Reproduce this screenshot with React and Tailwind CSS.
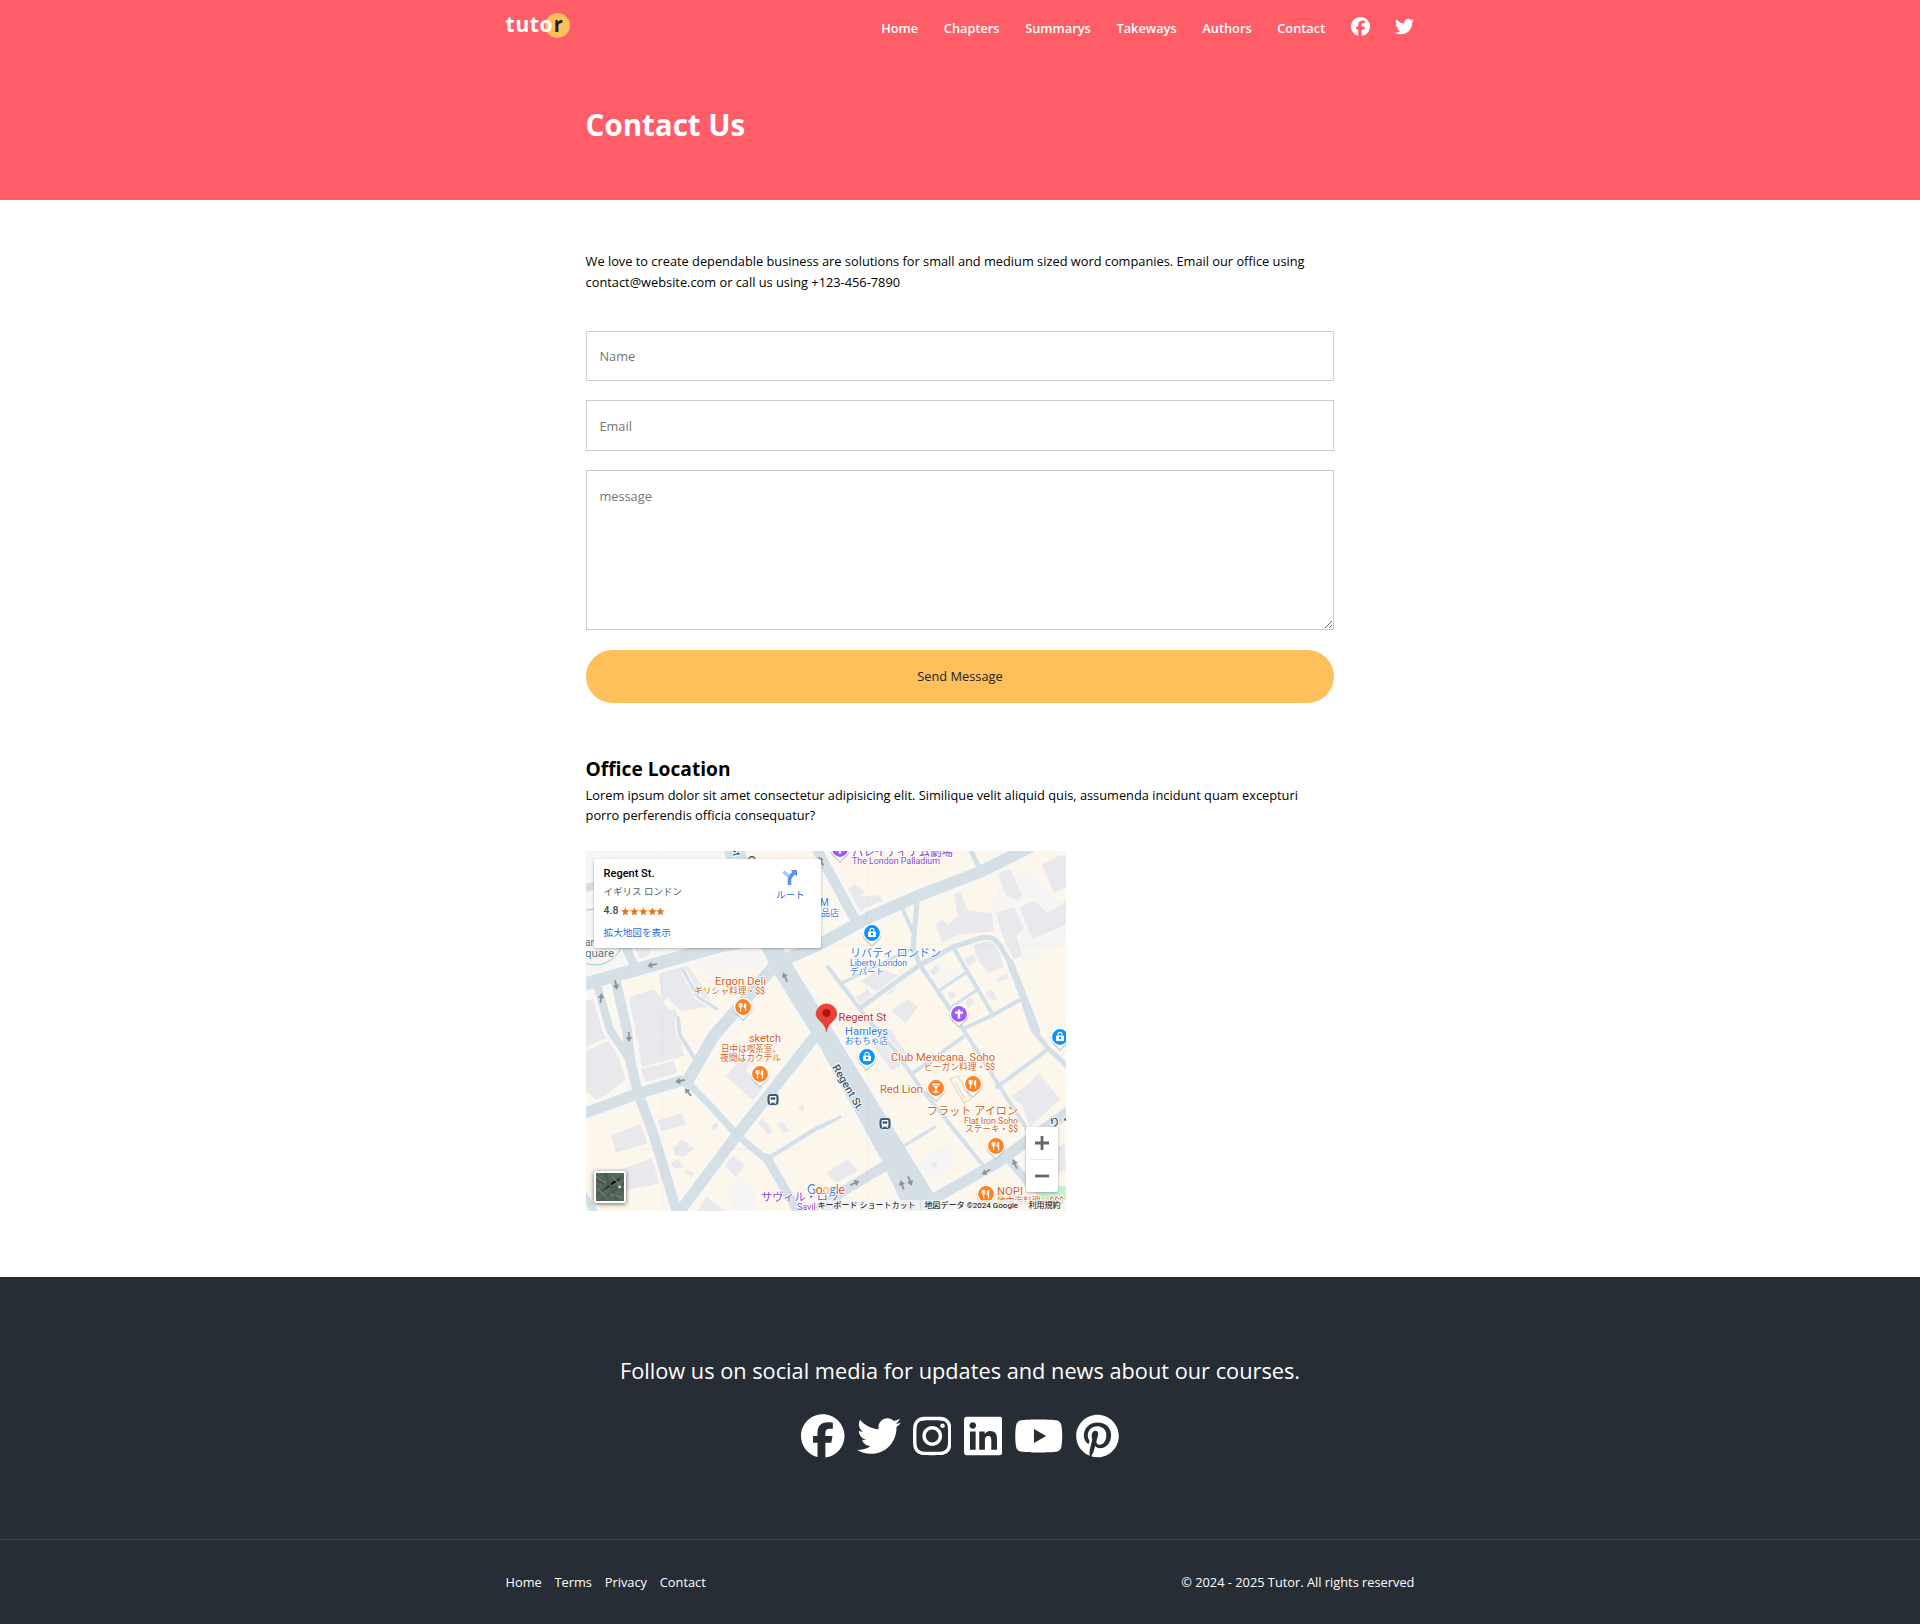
import { FaFacebook, FaTwitter, FaInstagram, FaLinkedin, FaYoutube, FaPinterest } from "react-icons/fa6";

const NAV = ["Home", "Chapters", "Summarys", "Takeways", "Authors", "Contact"];
const LINKS = ["Home", "Terms", "Privacy", "Contact"];

const BUILDINGS = [
  "18,50 45,30 80,60 60,110 35,100",
  "82,120 100,112 116,135 128,155 96,160 84,150",
  "44,146 68,138 88,165 60,180 42,170",
  "72,114 92,106 104,140 76,150",
  "0,200 26,188 40,228 12,250 0,240",
  "52,190 92,182 98,205 56,216",
  "55,218 88,210 92,226 60,232",
  "0,150 12,146 24,186 0,196",
  "48,160 90,158 94,182 50,190",
  "70,270 96,262 100,274 74,280",
  "25,284 55,273 62,292 30,302",
  "32,320 66,307 74,332 36,340",
  "88,296 96,288 108,298 98,306 88,304",
  "84,312 92,308 98,316 88,318",
  "100,318 108,322 106,326 98,322",
  "140,225 158,205 164,210 160,220 178,238 168,250",
  "125,276 131,268 134,272 128,280",
  "136,312 146,303 158,314 150,326",
  "171,270 176,267 187,280 182,284",
  "191,274 196,270 204,280 198,282",
  "212,256 216,253 219,259 215,261",
  "112,360 120,346 140,360",
  "256,44 268,33 278,40 276,46 292,44 301,54 288,62 280,54 276,62 270,61",
  "368,44 374,40 382,60 406,62 408,80 372,84 356,92 350,74 356,68 362,74 372,64",
  "412,22 424,18 436,44 432,50 420,44",
  "456,14 474,4 480,6 480,36 468,42",
  "410,62 428,56 438,78 430,84 436,104 428,108 416,84",
  "434,56 448,50 462,62 480,50 480,74 446,88",
  "388,94 408,88 418,116 402,122 390,106",
  "378,108 386,104 391,110 382,116",
  "344,120 350,114 354,118 348,124",
  "361,142 367,140 370,146 364,148",
  "378,148 384,143 388,152 382,157",
  "399,142 406,138 411,148 406,150",
  "410,128 420,123 425,126 412,132",
  "305,159 322,148 332,156 320,172 312,166",
  "275,130 294,118 318,126 304,144 292,142",
  "268,148 282,138 286,144 274,156",
  "284,190 304,178 324,208 306,220",
  "424,246 444,232 452,222 474,248 444,276 436,254",
  "240,322 262,308 272,320 250,332",
  "345,313 350,311 352,315 347,317",
  "456,306 478,292 480,318 470,324",
  "310,346 326,338 336,352 320,360",
];

const PALE = [
  "100,70 172,82 186,112 130,124 92,112",
  "336,308 358,292 372,310 350,330 336,324",
  "416,28 446,20 480,60 480,90 440,112 424,90 402,66",
  "142,340 152,326 170,336 170,360 146,360",
  "126,232 130,230 136,236 132,238",
  "0,0 140,0 150,20 160,60 120,110 40,110 0,130",
  "336,126 352,110 372,120 358,140",
];

const REGENT = "137,-2 158,-2 195,94 211,121 247,179 349,345 356,362 320,362 297,312 234,196 187,121 172,90";

const ROADS = [
  ["M-4,134 L77,111 L130,96 L190,84", 13],
  ["M200,108 L234,93 L284,66 L334,44 L394,21 L444,-4", 12],
  ["M222,-18 L271,72", 10],
  ["M384,-2 L394,18", 5],
  ["M316,57 L327,81", 4],
  ["M331,50 L327,97 L334,114", 5],
  ["M274,157 L334,114 L367,96 L395,87 Q407,84 413,93 L424,111 L447,179 L461,196 L484,218", 5],
  ["M424,111 L451,180", 7],
  ["M334,114 L364,158 L377,178 L414,236 L446,286", 4],
  ["M367,96 L407,164", 4],
  ["M354,139 L381,121", 3],
  ["M364,157 L391,139", 3],
  ["M377,178 L407,164 L437,147", 4],
  ["M242,116 L284,171 L311,202 L334,236 L399,317", 4],
  ["M256,132 L327,97", 3],
  ["M327,222 L377,186", 4],
  ["M411,236 L461,199", 4],
  ["M316,296 L349,276", 3],
  ["M347,348 L411,312 L441,290 L484,260", 11],
  ["M421,306 L444,334 L470,352", 8],
  ["M230,362 L254,342 L297,316", 10],
  ["M234,277 L254,266", 3],
  ["M91,364 L151,284 L181,246 L234,179", 11],
  ["M195,107 L127,186 L101,231", 12],
  ["M101,231 L122,252 L151,284 L181,309", 7],
  ["M181,307 L193,328 L214,364", 9],
  ["M-4,263 L51,243 L94,230", 11],
  ["M12,137 L24,179 L44,209", 8],
  ["M29,127 L41,179 L44,209 L52,242 L67,282 L92,364", 10],
  ["M97,119 L112,146 L131,158", 3],
  ["M92,167 L94,184 L109,208", 4],
  ["M181,308 L231,277 L246,270", 4],
  ["M-2,344 L10,364", 7],
  ["M38,92 L48,114", 9],
  ["M-2,38 L10,34", 8],
];

const ARROWS = [
  [66, 114, 168], [30, 134, 78], [15, 147, -82], [199, 126, -115], [43, 186, 88], [94, 230, 168],
  [102, 241, -130], [269, 332, -25], [316, 334, -112], [324, 330, 68], [400, 321, 150], [429, 313, -112], [235, 10, -118],
];

const PINS = [
  [157, 156, "food"], [174, 223, "food"], [387, 233, "food"], [410, 295, "food"], [400, 343, "food"],
  [350, 237, "drink"], [286, 82, "shop"], [281, 206, "shop"], [474, 186, "shop"], [373, 163, "church"], [254, -2, "church"],
];

const PIN_COLOR = { food: "#ff8126", drink: "#ff8126", shop: "#0a94ff", church: "#a259ff" };

function Pin({ x, y, kind }) {
  return (
    <g transform={`translate(${x} ${y})`}>
      <path d="M0,13 L-5,8 A9.4,9.4 0 1 1 5,8 Z" fill="#9aa0a6" opacity=".7" transform="translate(0 .8)" />
      <path d="M0,12.5 L-5,7.6 A9.2,9.2 0 1 1 5,7.6 Z" fill="#fff" />
      <circle r="7.9" fill={PIN_COLOR[kind]} />
      {kind === "food" && (
        <g stroke="#fff" strokeWidth="1.1" fill="none">
          <path d="M-3.8,-4 V-1 Q-3.8,.2 -2.4,.2 Q-1,.2 -1,-1 V-4 M-2.4,-4 V4.4" />
          <path d="M2.6,4.4 V-3.4 Q1.2,-3 1.3,.6 H2.6" fill="#fff" />
        </g>
      )}
      {kind === "drink" && <path d="M-4.4,-4.4 H4.4 L.7,0 V3.4 H2.6 V4.7 H-2.6 V3.4 H-.7 V0 Z M-2,-3 H2 L1.2,-2 H-1.2 Z" fill="#fff" fillRule="evenodd" />}
      {kind === "shop" && (
        <g>
          <rect x="-4" y="-1.6" width="8" height="5.6" rx=".8" fill="#fff" />
          <path d="M-2,-1.4 V-2.6 A2,2 0 0 1 2,-2.6 V-1.4" fill="none" stroke="#fff" strokeWidth="1.1" />
          <rect x="-1" y="0" width="2" height="2" fill="#0a94ff" />
        </g>
      )}
      {kind === "church" && <path d="M0,-4.4 V4.6 M-4,-1.4 H4" stroke="#fff" strokeWidth="2.4" />}
    </g>
  );
}

function Bus({ x, y }) {
  return (
    <g transform={`translate(${x} ${y})`}>
      <rect x="-6" y="-6" width="12" height="12" rx="3.4" fill="#3c5a73" stroke="#fff" strokeWidth=".8" />
      <rect x="-3.4" y="-3.6" width="6.8" height="6.8" rx="1.2" fill="#fff" />
      <rect x="-2.3" y="-2.2" width="4.6" height="2.4" fill="#3c5a73" />
      <path d="M-2.4,3.2 V4.2 M2.4,3.2 V4.2" stroke="#fff" strokeWidth="1.2" />
    </g>
  );
}

function Label({ x, y, size, color, children, weight, rotate, w }) {
  return (
    <text
      x={x}
      y={y}
      fontSize={size}
      fill={color}
      fontWeight={weight}
      stroke="#fff"
      strokeWidth="1.6"
      strokeLinejoin="round"
      paintOrder="stroke"
      textLength={w}
      lengthAdjust="spacingAndGlyphs"
      transform={rotate ? `rotate(${rotate} ${x} ${y})` : undefined}
    >
      {children}
    </text>
  );
}

const ORANGE = "#d6611a";
const BLUE = "#2f7de1";
const PURPLE = "#8b45d6";

function MapDrawing() {
  return (
    <svg viewBox="0 0 480 360" className="block h-[360px] w-[480px] font-['Roboto','Noto_Sans_CJK_JP',sans-serif]">
      <rect width="480" height="360" fill="#fcf7ea" />
      {PALE.map((p) => <polygon key={p} points={p} fill="#f6f5f4" />)}
      {BUILDINGS.map((p) => <polygon key={p} points={p} fill="#e9e8ed" />)}
      <polygon points={REGENT} fill="#f8f7f4" stroke="#f8f7f4" strokeWidth="7" />
      {ROADS.map(([d, w]) => <path key={d} d={d} fill="none" stroke="#f8f7f4" strokeWidth={w > 6 ? w + 7 : w + 3} strokeLinejoin="round" />)}
      <polygon points={REGENT} fill="#d5dfe6" />
      {ROADS.map(([d, w]) => <path key={d} d={d} fill="none" stroke="#d5dfe6" strokeWidth={w} strokeLinejoin="round" strokeLinecap="round" />)}
      <path d="M0,298 H480 M281,0 V360 M76,0 V360 M0,94 H480" stroke="#7a7a90" strokeOpacity=".05" />
      <path d="M364,228 l8,-3 l13,23 l-7,4 z M369,231 l10,17" fill="none" stroke="#e6dfc6" strokeWidth="1.4" />
      <path d="M452,345 l12,-10 h16 v14 h-28 z" fill="#c9efd3" />
      <circle cx="9" cy="86" r="28" fill="none" stroke="#8fd6b5" strokeWidth="1" />
      {ARROWS.map(([x, y, r]) => (
        <path key={`${x}-${y}`} transform={`translate(${x} ${y}) rotate(${r})`} d="M-5,-.9 H0 V-3.2 L5,0 L0,3.2 V.9 H-5 Z" fill="#8d9499" />
      ))}
      <Label x={-1} y={95} size={10} color="#55707f">an</Label>
      <Label x={-1} y={106} size={10} color="#55707f" w={29}>quare</Label>
      <Label x={146} y={-4} size={10} weight="500" color="#3f5468" rotate={80}>St</Label>
      <text x="161" y="16" fontSize="14" fill="#3f5468">O</text>
      <Label x={266} y={5} size={12} color={PURPLE} w={101}>パレイディアム劇場</Label>
      <Label x={266} y={13} size={8.6} color={PURPLE} w={88}>The London Palladium</Label>
      <Label x={234} y={55} size={10} color={BLUE}>M</Label>
      <Label x={235} y={65} size={9} color={BLUE}>品店</Label>
      <Label x={264} y={106} size={11} color={BLUE} w={91}>リバティ ロンドン</Label>
      <Label x={264} y={115} size={8.6} color={BLUE} w={57}>Liberty London</Label>
      <Label x={264} y={124} size={8.6} color={BLUE} w={34}>デパート</Label>
      <Label x={129} y={133.5} size={10.4} color={ORANGE} w={51}>Ergon Deli</Label>
      <Label x={108} y={143} size={8.6} color={ORANGE} w={71}>ギリシャ料理・$$</Label>
      <Label x={163} y={191} size={10.4} color={ORANGE} w={32}>sketch</Label>
      <Label x={135} y={201} size={8.6} color={ORANGE} w={60}>日中は喫茶室、</Label>
      <Label x={134} y={210} size={8.6} color={ORANGE} w={61}>夜間はカクテル</Label>
      <Label x={259} y={184} size={10.4} color={BLUE} w={43}>Hamleys</Label>
      <Label x={259} y={193} size={8.6} color={BLUE} w={43}>おもちゃ店</Label>
      <Label x={305} y={210} size={10.4} color={ORANGE} w={104}>Club Mexicana. Soho</Label>
      <Label x={338} y={219} size={8.6} color={ORANGE} w={71}>ビーガン料理・$$</Label>
      <Label x={294} y={242} size={10.4} color={ORANGE} w={43}>Red Lion</Label>
      <Label x={341} y={264} size={11} color={ORANGE} w={91}>フラット アイロン</Label>
      <Label x={378} y={273} size={8.6} color={ORANGE} w={54}>Flat Iron Soho</Label>
      <Label x={379} y={281} size={8.6} color={ORANGE} w={53}>ステーキ・$$</Label>
      <Label x={411} y={344} size={10.4} color={ORANGE} w={26}>NOPI</Label>
      <Label x={411} y={353} size={8.6} color={ORANGE} w={67}>地中海料理・$$$</Label>
      <Label x={175} y={350} size={11} color={PURPLE} w={78}>サヴィル・ロウ</Label>
      <Label x={211} y={359} size={8.6} color={PURPLE} w={43}>Savile Row</Label>
      <Label x={246} y={216} size={10.6} weight="500" color="#3f5468" rotate={60} w={52}>Regent St.</Label>
      <Label x={464} y={276} size={11} weight="500" color="#3f5468" rotate={-12}>り・</Label>
      {PINS.map(([x, y, kind]) => <Pin key={`${x}-${y}`} x={x} y={y} kind={kind} />)}
      <Bus x={187} y={248.5} />
      <Bus x={299} y={272.5} />
      <path d="M240.5,181 C239.5,171 230,170 230,162 A10.6,10.6 0 0 1 251,162 C251,170 241.500,171 240.5,181 Z" fill="#ea4335" stroke="#d33426" strokeWidth=".5" />
      <circle cx="240.5" cy="162" r="4" fill="#b31412" />
      <Label x={252.5} y={170} size={10.6} color="#c0322b" w={48}>Regent St</Label>
      <text x="221" y="343" fontSize="12.5" textLength="38" lengthAdjust="spacingAndGlyphs" stroke="#fff" strokeWidth="1.6" paintOrder="stroke" className="font-['Lato',sans-serif]">
        <tspan fill="#4285f4">G</tspan><tspan fill="#ea4335">o</tspan><tspan fill="#fbbc05">o</tspan><tspan fill="#4285f4">g</tspan><tspan fill="#34a853">l</tspan><tspan fill="#ea4335">e</tspan>
      </text>
    </svg>
  );
}

function PlaceCard() {
  return (
    <div className="absolute left-2 top-2 flex h-[89px] w-[227px] justify-between rounded-[2px] bg-white pl-[10px] pr-[16px] pt-[6px] shadow-[0_1px_3px_rgba(0,0,0,0.3)]">
      <div className="flex flex-col whitespace-nowrap">
        <div className="h-[17px] text-[11px] font-medium leading-[17px] text-black">Regent St.</div>
        <div className="h-[19px] text-[9.5px] leading-[19px] text-[#5b5b5b]">イギリス ロンドン</div>
        <div className="flex h-[20px] items-center gap-[3px] text-[10.5px] font-medium text-[#4a4a4a]">
          4.8
          <span className="flex">
            {[0, 1, 2, 3, 4].map((i) => (
              <svg key={i} viewBox="0 0 24 24" className="h-[9px] w-[8.7px]" fill="#e7711b">
                <path d="M12 0l3.2 8.4 8.8.4-6.9 5.6 2.3 8.6L12 18.1 4.6 23l2.3-8.6L0 8.8l8.8-.4z" />
              </svg>
            ))}
          </span>
        </div>
        <div className="h-[22px] text-[9.6px] leading-[23px] text-[#1a73e8]">拡大地図を表示</div>
      </div>
      <div className="flex flex-col items-center pt-[3px]">
        <svg viewBox="0 0 16 18" className="h-[18px] w-[16px]" fill="none">
          <path d="M1.5 3.5 L7.5 9" stroke="#a9c8f3" strokeWidth="3.5" />
          <path d="M7.5 17 V12 Q7.5 8.5 12 5" stroke="#5b95e5" strokeWidth="3.6" />
          <path d="M8.5 2 H15 V8.5 Z" fill="#5b95e5" />
        </svg>
        <div className="text-[9.5px] leading-[18px] text-[#1a73e8]">ルート</div>
      </div>
    </div>
  );
}

function MapWidget() {
  return (
    <div className="relative h-[360px] w-[480px] overflow-hidden font-['Roboto','Noto_Sans_CJK_JP',sans-serif]">
      <MapDrawing />
      <PlaceCard />
      <svg viewBox="0 0 32 32" className="absolute bottom-2 left-2 h-8 w-8 rounded-[2px] border-2 border-white bg-[#55665c] shadow-[0_1px_4px_rgba(0,0,0,0.6)]">
        <path d="M0 8 L32 20 M10 0 L24 32 M0 26 L20 8 L32 4 M4 32 L32 12" stroke="#4a5a51" strokeWidth="2.5" />
        <path d="M0 4 L12 12 M16 24 L30 28 M2 18 L12 28 M18 4 L28 14" stroke="#6f7b70" strokeWidth="1.5" />
        <circle cx="27" cy="16" r="1.7" fill="#d5d3c8" />
      </svg>
      <div className="absolute bottom-[19px] right-2 flex h-[65px] w-8 flex-col items-center justify-between rounded-[2px] bg-white shadow-[0_1px_3px_rgba(0,0,0,0.3)]">
        <svg viewBox="0 0 32 32" className="h-8 w-8" stroke="#666" strokeWidth="2.8"><path d="M9 16 H23 M16 9 V23" /></svg>
        <div className="h-px w-6 shrink-0 bg-[#e6e6e6]" />
        <svg viewBox="0 0 32 32" className="h-8 w-8" stroke="#666" strokeWidth="2.8"><path d="M9 16 H23" /></svg>
      </div>
      <div className="absolute bottom-0 right-0 flex h-[11px] items-center whitespace-nowrap bg-[#f5f5f5]/75 text-[8px] leading-[11px] text-black">
        <span className="w-[104px] pl-[2px]">キーボード ショートカット</span>
        <span className="w-[109px] border-l border-[#ddd] pl-[4px]">地図データ ©2024 Google</span>
        <span className="w-[37px]">利用規約</span>
      </div>
    </div>
  );
}

function Logo() {
  return (
    <div className="relative h-[25px] w-[65px]">
      <div className="absolute left-[39px] top-0 h-[25px] w-[25px] rounded-full bg-[#ffc05c]" />
      <svg viewBox="0 0 65 25" className="absolute inset-0 h-[25px] w-[65px] overflow-visible font-['Open_Sans',sans-serif]" fontSize="21" fontWeight="700">
        <text x="-0.5 9.6 23.8 33.6" y="19" fill="#fff">tuto</text>
        <text x="47.8" y="19" fill="#222" textLength="9" lengthAdjust="spacingAndGlyphs">r</text>
      </svg>
    </div>
  );
}

export default function App() {
  return (
    <div className="flex h-[1624px] flex-col overflow-hidden bg-white font-['Open_Sans','Noto_Sans_CJK_JP',sans-serif] text-[12.8px] text-black">
      <header className="h-[200px] bg-[#ff5e68] text-white">
        <div className="mx-auto flex h-[56px] w-[908.8px] justify-between">
          <div className="pt-[13px]"><Logo /></div>
          <nav className="flex gap-[25.6px] font-semibold leading-[57px]">
            {NAV.map((n) => <a key={n}>{n}</a>)}
            <FaFacebook className="mt-[17px] size-[19px]" />
            <FaTwitter className="mt-[17px] size-[19px]" />
          </nav>
        </div>
        <h1 className="mx-auto mt-[46px] w-[748.8px] text-[29.5px] font-bold leading-[46px]">Contact Us</h1>
      </header>

      <main className="mx-auto flex h-[1077px] w-[748.8px] flex-col">
        <p className="mt-[51px] leading-[20.8px]">
          We love to create dependable business are solutions for small and medium sized word companies. Email our office using<br />
          contact@website.com or call us using +123-456-7890
        </p>
        <form className="mt-[38px] flex flex-col">
          <input placeholder="Name" className="h-[50px] border border-[#ccc] px-[12.8px] placeholder:text-[#757575]" />
          <input placeholder="Email" className="mt-[19px] h-[51px] border border-[#ccc] px-[12.8px] pt-[2px] placeholder:text-[#757575]" />
          <textarea placeholder="message" className="mt-[19px] h-[160px] resize border border-[#ccc] px-[12.8px] py-[16px] placeholder:text-[#757575]" />
          <button type="button" className="mt-[20px] h-[53px] rounded-full bg-[#ffc05c] pt-[1px] text-[#222]">Send Message</button>
        </form>
        <h2 className="mb-[2px] mt-[51px] text-[19.2px] font-bold leading-[29px]">Office Location</h2>
        <p className="leading-[20.8px]">
          Lorem ipsum dolor sit amet consectetur adipisicing elit. Similique velit aliquid quis, assumenda incidunt quam excepturi<br />
          porro perferendis officia consequatur?
        </p>
        <div className="mt-[25px]"><MapWidget /></div>
      </main>

      <footer className="h-[347px] bg-[#272d35] text-white">
        <div className="flex h-[262px] flex-col items-center pt-[76px]">
          <p className="text-[21.76px] leading-[36px]">Follow us on social media for updates and news about our courses.</p>
          <div className="mt-[25px] flex items-center gap-[12.2px]">
            <FaFacebook className="h-[44px] w-[43.5px]" />
            <FaTwitter className="h-[44px] w-[44px]" />
            <FaInstagram className="h-[44px] w-[38.5px]" />
            <FaLinkedin className="h-[44px] w-[38.5px]" />
            <FaYoutube className="h-[44px] w-[49.5px]" />
            <FaPinterest className="h-[44px] w-[43px]" />
          </div>
        </div>
        <div className="border-t border-[#3f4854]">
          <div className="mx-auto flex w-[908.8px] justify-between pt-[31px] leading-[22px]">
            <div className="flex gap-[12.8px]">{LINKS.map((n) => <a key={n}>{n}</a>)}</div>
            <p>© 2024 - 2025 Tutor. All rights reserved</p>
          </div>
        </div>
      </footer>
    </div>
  );
}
